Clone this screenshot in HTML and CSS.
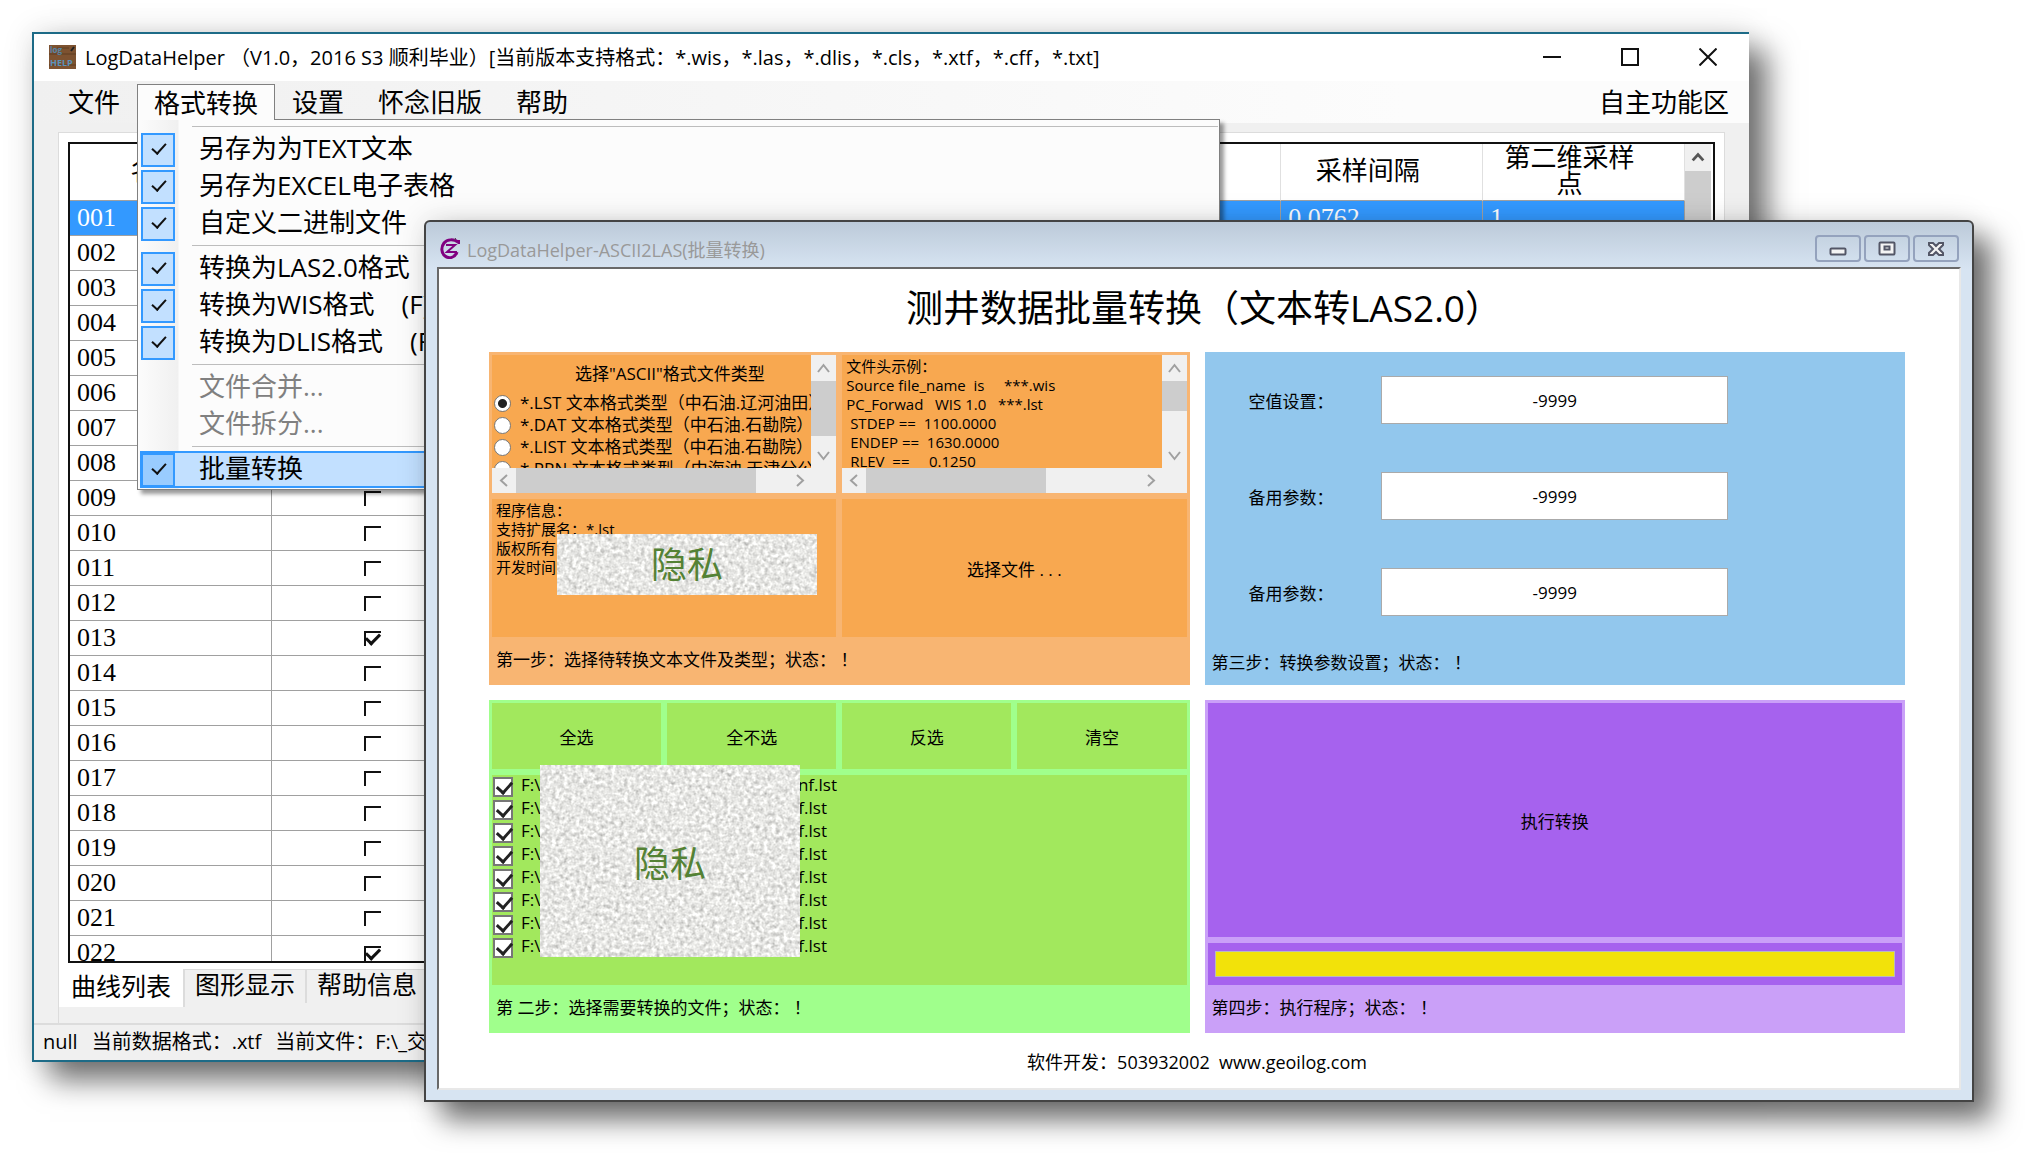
FILE: index.html
```html
<!DOCTYPE html>
<html lang="zh-CN">
<head>
<meta charset="utf-8">
<title>LogDataHelper</title>
<link rel="stylesheet" href="styles.css">
</head>
<body>
<main class="desktop">

  <section class="main-window">
    <header class="main-title">
      <svg class="app-icon" viewBox="0 0 27 24" aria-hidden="true">
        <rect width="27" height="24" fill="#7d5230"/>
        <path d="M0 9h27M0 20h27M8 3h12" stroke="#5f3c20" stroke-width="1"/>
        <text x="1" y="8" font-size="8" font-weight="bold" fill="#5585a8">log</text>
        <text x="1" y="21" font-size="9" font-weight="bold" fill="#5b93bd">HELP</text>
        <path d="M22 6l3-4" stroke="#222" stroke-width="2"/>
      </svg>
      <h1 class="main-name">LogDataHelper （V1.0，2016 S3 顺利毕业）[当前版本支持格式：*.wis，*.las，*.dlis，*.cls，*.xtf，*.cff，*.txt]</h1>
      <div class="main-controls">
        <button type="button" aria-label="最小化"><svg viewBox="0 0 18 18"><path d="M0 9h18" /></svg></button>
        <button type="button" aria-label="最大化"><svg viewBox="0 0 18 18"><path d="M1 1h16v16H1z"/></svg></button>
        <button type="button" aria-label="关闭"><svg viewBox="0 0 18 18"><path d="M.5.5l17 17M17.500.5l-17 17"/></svg></button>
      </div>
    </header>

    <nav class="menubar">
      <button type="button" class="menu-item">文件</button>
      <div class="menu-open">
        <button type="button" class="menu-item menu-item-open">格式转换</button>
        <div class="dropdown">
          <hr>
          <label class="option"><input type="checkbox" checked><span>另存为为TEXT文本</span></label>
          <label class="option"><input type="checkbox" checked><span>另存为EXCEL电子表格</span></label>
          <label class="option"><input type="checkbox" checked><span>自定义二进制文件</span></label>
          <hr>
          <label class="option"><input type="checkbox" checked><span>转换为LAS2.0格式</span></label>
          <label class="option"><input type="checkbox" checked><span>转换为WIS格式    (F)</span></label>
          <label class="option"><input type="checkbox" checked><span>转换为DLIS格式    (F)</span></label>
          <hr>
          <button type="button" class="option option-off" disabled><span>文件合并...</span></button>
          <button type="button" class="option option-off" disabled><span>文件拆分...</span></button>
          <hr>
          <label class="option option-hot"><input type="checkbox" checked><span>批量转换</span></label>
        </div>
      </div>
      <button type="button" class="menu-item">设置</button>
      <button type="button" class="menu-item">怀念旧版</button>
      <button type="button" class="menu-item">帮助</button>
      <button type="button" class="menu-item menu-item-end">自主功能区</button>
    </nav>

    <div class="main-body">
      <div class="tab-page">
        <div class="grid-view">
          <div class="grid-scroll">
            <table class="curves">
              <thead>
                <tr><th>名称</th><th></th><th></th><th></th><th></th><th></th><th>采样间隔</th><th>第二维采样<br>点</th></tr>
              </thead>
              <tbody id="curve-rows"></tbody>
            </table>
          </div>
          <div class="main-scrollbar">
            <svg viewBox="0 0 27 28"><path d="M8 17l5.500-6 5.500 6"/></svg>
            <div class="main-thumb"></div>
          </div>
        </div>
      </div>
      <div class="tabs">
        <button type="button" class="tab tab-on">曲线列表</button>
        <button type="button" class="tab">图形显示</button>
        <button type="button" class="tab">帮助信息</button>
      </div>
    </div>
    <footer class="status"><span>null</span><span>当前数据格式：.xtf</span><span>当前文件：F:\_交</span></footer>
  </section>

  <section class="dialog">
    <header class="dialog-title">
      <svg class="dialog-icon" viewBox="0 0 20 21" aria-hidden="true">
        <path d="M19 2v4M18 4C14 1 7 1 4 5S1 15 5 18s10 2 12-4" fill="none" stroke="#800080" stroke-width="3"/>
        <path d="M6 7h9l-8 7h10" fill="none" stroke="#800080" stroke-width="2"/>
        <path d="M14 2l2-2" stroke="#555" stroke-width="1"/>
      </svg>
      <h2 class="dialog-name">LogDataHelper-ASCII2LAS(批量转换)</h2>
      <div class="dialog-controls">
        <button type="button" aria-label="最小化"><svg viewBox="0 0 20 16"><rect x="2.500" y="7.500" width="15" height="6" rx="1"/></svg></button>
        <button type="button" aria-label="最大化"><svg viewBox="0 0 20 16"><rect x="2.500" y="1.500" width="15" height="12" rx="1"/><rect x="7.500" y="5.500" width="5" height="3" fill="#a8bdd0"/></svg></button>
        <button type="button" aria-label="关闭"><svg viewBox="0 0 20 16"><path d="M3 2h4l3 3 3-3h4v2l-4 4 4 4v2h-4l-3-3-3 3H3v-2l4-4-4-4z"/></svg></button>
      </div>
    </header>

    <div class="client">
      <h3 class="heading">测井数据批量转换（文本转LAS2.0）</h3>
      <div class="steps">

        <section class="step step-one">
          <div class="tiles">
            <div class="tile scroller">
              <div class="view formats">
                <p class="formats-title">选择"ASCII"格式文件类型</p>
                <label class="format"><input type="radio" name="format" checked>*.LST 文本格式类型（中石油.辽河油田）</label>
                <label class="format"><input type="radio" name="format">*.DAT 文本格式类型（中石油.石勘院）</label>
                <label class="format"><input type="radio" name="format">*.LIST 文本格式类型（中石油.石勘院）</label>
                <label class="format"><input type="radio" name="format">*.PRN 文本格式类型（中海油.天津分公司）</label>
              </div>
              <div class="vbar">
                <svg viewBox="0 0 25 26"><path d="M7 17l5.500-7 5.500 7"/></svg>
                <div class="vthumb vthumb-long"></div>
                <svg viewBox="0 0 25 26"><path d="M7 10l5.500 7 5.500-7"/></svg>
              </div>
              <div class="hbar">
                <svg viewBox="0 0 24 25"><path d="M15 7l-6 5.500 6 5.500"/></svg>
                <div class="hthumb hthumb-long"></div>
                <svg viewBox="0 0 24 25"><path d="M9 7l6 5.500-6 5.500"/></svg>
              </div>
            </div>

            <div class="tile scroller">
              <pre class="view sample">文件头示例：
Source file_name  is     ***.wis
PC_Forwad   WIS 1.0   ***.lst
 STDEP ==  1100.0000
 ENDEP ==  1630.0000
 RLEV  ==     0.1250</pre>
              <div class="vbar">
                <svg viewBox="0 0 25 26"><path d="M7 17l5.500-7 5.500 7"/></svg>
                <div class="vthumb"></div>
                <svg viewBox="0 0 25 26"><path d="M7 10l5.500 7 5.500-7"/></svg>
              </div>
              <div class="hbar">
                <svg viewBox="0 0 24 25"><path d="M15 7l-6 5.500 6 5.500"/></svg>
                <div class="hthumb"></div>
                <svg viewBox="0 0 24 25"><path d="M9 7l6 5.500-6 5.500"/></svg>
              </div>
            </div>

            <div class="tile info">
              <p>程序信息：</p><p>支持扩展名：*.lst</p><p>版权所有</p><p>开发时间</p>
              <div class="mask mask-info">
                <svg class="noise" aria-hidden="true">
                  <filter id="grain" x="0" y="0" width="100%" height="100%" color-interpolation-filters="sRGB">
                    <feTurbulence type="fractalNoise" baseFrequency="0.25" numOctaves="3" seed="4"/>
                    <feColorMatrix values="0.35 0.3 0 0 0.58  0.35 0.3 0 0 0.58  0.35 0.3 0 0 0.57  0 0 0 0 1"/>
                  </filter>
                  <rect width="100%" height="100%" filter="url(#grain)"/>
                </svg>
                <span>隐私</span>
              </div>
            </div>
            <button type="button" class="tile">选择文件 . . .</button>
          </div>
          <p class="step-note">第一步：选择待转换文本文件及类型；状态： ！</p>
        </section>

        <section class="step step-three">
          <div class="params">
            <label for="null-value">空值设置：</label><input id="null-value" type="text" value="-9999">
            <label for="spare-one">备用参数：</label><input id="spare-one" type="text" value="-9999">
            <label for="spare-two">备用参数：</label><input id="spare-two" type="text" value="-9999">
          </div>
          <p class="step-note">第三步：转换参数设置；状态： ！</p>
        </section>

        <section class="step step-two">
          <div class="picks">
            <button type="button" class="tile">全选</button>
            <button type="button" class="tile">全不选</button>
            <button type="button" class="tile">反选</button>
            <button type="button" class="tile">清空</button>
          </div>
          <div class="files">
            <div id="file-rows"></div>
            <div class="mask mask-files">
              <svg class="noise" aria-hidden="true"><rect width="100%" height="100%" filter="url(#grain)"/></svg>
              <span>隐私</span>
            </div>
          </div>
          <p class="step-note">第 二步：选择需要转换的文件；状态： ！</p>
        </section>

        <section class="step step-four">
          <button type="button" class="tile run">执行转换</button>
          <div class="tile progress-box"><div class="progress"></div></div>
          <p class="step-note">第四步：执行程序；状态： ！</p>
        </section>
      </div>
      <p class="credit">软件开发：503932002&nbsp; www.geoilog.com</p>
    </div>
  </section>
</main>
<script src="app.js"></script>
</body>
</html>
```

FILE: styles.css
```css
* { box-sizing: border-box; }

body {
  margin: 0;
  background: #fff;
  color: #000;
  font-family: "Open Sans", "Noto Sans CJK SC", sans-serif;
  font-size: 17px;
}

button, input {
  margin: 0;
  padding: 0;
  border: 0;
  background: none;
  color: inherit;
  font: inherit;
}

h1, h2, h3, p, pre { margin: 0; font-weight: normal; }

svg { display: block; }

.desktop {
  position: relative;
  min-height: 100vh;
  overflow: hidden;
}

/* Main window */

.main-window {
  position: absolute;
  z-index: 1;
  left: 32px;
  right: 290px;
  top: 32px;
  border: 2px solid #1d6b87;
  border-right: 0;
  background: #f0f0f0;
  box-shadow: 18px 18px 28px rgba(0, 0, 0, 0.55), 0 0 30px rgba(0, 0, 0, 0.12);
}

.main-title {
  display: flex;
  align-items: center;
  height: 47px;
  padding: 0 32px 2px 15px;
  background: #fff;
}

.app-icon { width: 27px; height: 24px; margin-right: 9px; }

.main-name { font-size: 20px; white-space: pre; }

.main-controls { display: flex; gap: 60px; margin-left: auto; }

.main-controls button { width: 18px; height: 18px; }

.main-controls path { fill: none; stroke: #111; stroke-width: 2; }

.menubar {
  display: flex;
  height: 42px;
  padding: 3px 3px 4px 17px;
  background: linear-gradient(90deg, #f0f0f0, #fcfcfc 80%);
}

.menu-item {
  height: 35px;
  padding: 0 16px;
  border: 1px solid transparent;
  border-bottom: 0;
  font-size: 26px;
  line-height: 32px;
}

.menu-item-end { margin-left: auto; }

.menu-open { position: relative; }

.menu-item-open {
  position: relative;
  z-index: 3;
  height: 36px;
  border-color: #808080;
  background: #fcfcfc;
}

.dropdown {
  position: absolute;
  z-index: 2;
  left: 0;
  top: 35px;
  width: 1083px;
  padding: 3px 1px 1px 2px;
  border: 1px solid #808080;
  background: linear-gradient(90deg, #fcfcfc, #f0f0f0 40px, #fcfcfc 41px, #fcfcfc);
  box-shadow: 4px 4px 4px rgba(0, 0, 0, 0.4);
}

.dropdown hr {
  height: 1px;
  margin: 3px 0 4px 52px;
  border: 0;
  background: #bdbdbd;
}

.option {
  display: flex;
  align-items: center;
  width: 100%;
  height: 37px;
  padding-left: 1px;
  font-size: 26px;
  line-height: 33px;
  white-space: pre;
}

.option span { padding-bottom: 3px; }

.option input {
  width: 34px;
  height: 34px;
  margin-right: 24px;
  border: 2px solid #3399ff;
  background: #c2e0ff;
  appearance: none;
}

.option input::before {
  content: "";
  display: block;
  width: 12px;
  height: 6px;
  margin: 8px 0 0 9px;
  border: solid #111;
  border-width: 0 0 2px 2px;
  transform: rotate(-48deg);
}

.option-off { padding-left: 59px; color: #808080; }

.option-hot {
  padding-left: 0;
  border: 2px solid #3399ff;
  background: #c2e0ff;
}

.option-hot input { margin: 0 24px 0 -1px; background: #99ccff; }

.main-body { padding: 9px 24px 0; }

.tab-page {
  padding: 9px 9px 6px;
  border: 1px solid #dcdcdc;
  border-bottom: 0;
  background: #fff;
}

.grid-view {
  display: flex;
  height: 821px;
  border: 2px solid #111;
  background: #fff;
}

.grid-scroll { flex: 1; overflow: hidden; }

.curves {
  width: 100%;
  table-layout: fixed;
  border-collapse: separate;
  border-spacing: 0;
  font-family: "Liberation Serif", "Noto Sans CJK SC", serif;
  font-size: 26px;
}

.curves th {
  height: 57px;
  padding: 0 28px 0 0;
  border-right: 1px solid #e0e0e0;
  border-bottom: 1px solid #a0a0a0;
  font-weight: normal;
  line-height: 26px;
}

.curves td {
  height: 35px;
  padding: 0 7px;
  border-right: 1px solid #a0a0a0;
  border-bottom: 1px solid #a0a0a0;
  line-height: 34px;
}

.curves .picked td { background: #3399ff; color: #fff; }

.curves input {
  display: block;
  width: 17px;
  height: 15px;
  margin: 0 auto;
  border: solid #111;
  border-width: 2px 0 0 2px;
  appearance: none;
}

.curves input:checked::before {
  content: "";
  display: block;
  width: 11px;
  height: 6px;
  border: solid #111;
  border-width: 0 0 3px 3px;
  transform: rotate(-45deg);
}

.main-scrollbar {
  display: flex;
  flex-direction: column;
  width: 28px;
  border-right: 2px solid #fff;
  background: #f0f0f0;
}

.main-scrollbar path { fill: none; stroke: #555; stroke-width: 3; }

.main-thumb { height: 300px; background: #cdcdcd; }

.tabs { display: flex; height: 54px; border-left: 1px solid #dcdcdc; }

.tab {
  height: 34px;
  padding: 0 10px 5px;
  border-top: 1px solid #dcdcdc;
  border-right: 2px solid #dcdcdc;
  font-size: 25px;
  line-height: 25px;
}

.tab-on {
  height: 38px;
  padding: 0 12px 4px;
  border-top: 0;
  background: #fff;
  line-height: 34px;
}

.status {
  display: flex;
  gap: 14px;
  height: 37px;
  padding: 0 9px;
  border-top: 2px solid #dcdcdc;
  font-size: 20px;
  line-height: 33px;
}

/* Batch conversion window */

.dialog {
  position: absolute;
  z-index: 2;
  left: 424px;
  right: 65px;
  top: 220px;
  padding: 0 11px 10px;
  border: 2px solid #444;
  border-radius: 6px 6px 0 0;
  background: linear-gradient(#bccad9, #d7e4f2 47px);
  box-shadow: 18px 18px 28px rgba(0, 0, 0, 0.55), 0 0 30px rgba(0, 0, 0, 0.12);
}

.dialog-title {
  display: flex;
  align-items: center;
  height: 45px;
  padding: 8px 2px 0 3px;
}

.dialog-icon { width: 20px; height: 21px; margin-right: 7px; }

.dialog-name { color: #999; font-size: 18px; }

.dialog-controls { display: flex; gap: 3px; margin-left: auto; }

.dialog-controls button {
  display: flex;
  align-items: center;
  justify-content: center;
  width: 46px;
  height: 27px;
  border: 2px solid #94a2bd;
  border-radius: 4px;
}

.dialog-controls svg { width: 20px; height: 16px; }

.dialog-controls rect, .dialog-controls path {
  fill: #f4f4f4;
  stroke: #535666;
  stroke-width: 2;
}

.client {
  padding: 0 54px 0 50px;
  border: 2px solid #e8e8e8;
  border-top-color: #696969;
  border-left-color: #696969;
  background: #fff;
}

.heading {
  height: 83px;
  padding-left: 14px;
  font-size: 37px;
  line-height: 77px;
  text-align: center;
}

.steps { display: grid; grid-template-columns: 1fr 1fr; gap: 15px; }

.step { min-width: 0; height: 333px; padding: 3px; }

.step-note { padding: 0 4px; font-size: 17px; line-height: 45px; }

.step-one { background: #f8b572; }
.step-one .tile { background: #f8a850; }
.step-two { background: #a0ff8c; }
.step-two .tile, .files { background: #a2e85d; }
.step-three { padding-top: 0; background: #92c7ed; }
.step-four { background: #caa0f8; }
.step-four .tile { background: #a662ee; }

.tiles {
  display: grid;
  grid-template-columns: 1fr 1fr;
  grid-auto-rows: 138px;
  gap: 6px;
}

.scroller {
  display: grid;
  grid-template-columns: minmax(0, 1fr) 25px;
  grid-template-rows: 113px 25px;
}

.view { overflow: hidden; }

.formats-title {
  height: 37px;
  padding-left: 83px;
  line-height: 37px;
  white-space: nowrap;
}

.format {
  display: flex;
  align-items: center;
  gap: 9px;
  height: 22px;
  padding-left: 2px;
  line-height: 22px;
  white-space: nowrap;
}

.format input {
  flex: none;
  width: 17px;
  height: 17px;
  border: 1px solid #777;
  border-radius: 50%;
  background: #fff;
  appearance: none;
}

.format input:checked {
  background: radial-gradient(#222 4px, #fff 5px);
}

.sample, .info {
  padding: 2px 4px;
  font-family: inherit;
  font-size: 15px;
  line-height: 19px;
}

.info { position: relative; }

.vbar { display: flex; flex-direction: column; background: #f0f0f0; }

.vbar svg:last-child { margin-top: auto; }

.vthumb { height: 30px; background: #cdcdcd; }

.vthumb-long { height: 55px; }

.hbar {
  display: flex;
  grid-column: 1 / -1;
  padding-right: 24px;
  background: #f0f0f0;
}

.hbar svg { width: 24px; height: 25px; }

.hbar svg:last-child { margin-left: auto; }

.hthumb { width: 56%; background: #cdcdcd; }

.hthumb-long { width: 75%; }

.vbar path, .hbar path { fill: none; stroke: #a0a0a0; stroke-width: 2; }

/* Grainy covers over private details */

.mask {
  position: absolute;
  display: flex;
  align-items: center;
  justify-content: center;
  width: 260px;
  background: #eee;
  color: #548235;
  font-size: 36px;
}

.mask span { position: relative; }

.noise { position: absolute; width: 100%; height: 100%; }

.mask-info { left: 65px; top: 35px; height: 61px; }

.mask-files { left: 48px; top: -10px; height: 192px; }

.params {
  display: grid;
  grid-template-columns: 25% 50%;
  grid-auto-rows: 96px;
  align-items: center;
  height: 288px;
}

.params label { padding-left: 41px; }

.params input {
  width: 100%;
  height: 48px;
  border: 1px solid #aaa;
  background: #fff;
  text-align: center;
}

.picks {
  display: grid;
  grid-template-columns: repeat(4, 1fr);
  grid-auto-rows: 66px;
  gap: 6px;
}

.files {
  position: relative;
  height: 210px;
  margin-top: 6px;
}

.file {
  display: flex;
  align-items: center;
  width: 345px;
  height: 23px;
  padding-left: 1px;
  line-height: 20px;
}

.file span { padding-bottom: 3px; }

.file-short { width: 335px; }

.file input {
  width: 20px;
  height: 20px;
  margin-right: 8px;
  border: 2px solid #777;
  background: #fff;
  appearance: none;
}

.file input::before {
  content: "";
  display: block;
  width: 12px;
  height: 7px;
  margin: 2px 0 0 2px;
  border: solid #222;
  border-width: 0 0 3px 3px;
  transform: rotate(-48deg);
}

.file-end { margin-left: auto; }

.run { display: block; width: 100%; height: 234px; }

.progress-box { height: 42px; margin-top: 6px; padding: 8px 7px; }

.progress { height: 26px; border: 1px solid #bbb; background: #f2e20a; }

.credit {
  padding: 4px 0 0;
  font-size: 18px;
  line-height: 51px;
  text-align: center;
}
```

FILE: app.js
```js
const curveRows = document.getElementById("curve-rows");
const checkedRows = [13, 22];

for (let n = 1; n <= 22; n++) {
  const row = curveRows.insertRow();
  const id = String(n).padStart(3, "0");
  row.insertCell().textContent = id;
  const box = document.createElement("input");
  box.type = "checkbox";
  box.checked = checkedRows.includes(n);
  box.setAttribute("aria-label", id);
  row.insertCell().append(box);
  for (let c = 0; c < 6; c++) row.insertCell();
  if (n === 1) {
    row.className = "picked";
    row.cells[6].textContent = "0.0762";
    row.cells[7].textContent = "1";
  }
}

const endings = ["nf.lst", "f.lst", "f.lst", "f.lst", "f.lst", "f.lst", "f.lst", "f.lst"];
const fileRows = document.getElementById("file-rows");

endings.forEach((ending, i) => {
  const label = document.createElement("label");
  label.className = i === 0 ? "file" : "file file-short";
  label.innerHTML = '<input type="checkbox" checked><span>F:\\</span><span class="file-end">' + ending + "</span>";
  fileRows.append(label);
});
```
